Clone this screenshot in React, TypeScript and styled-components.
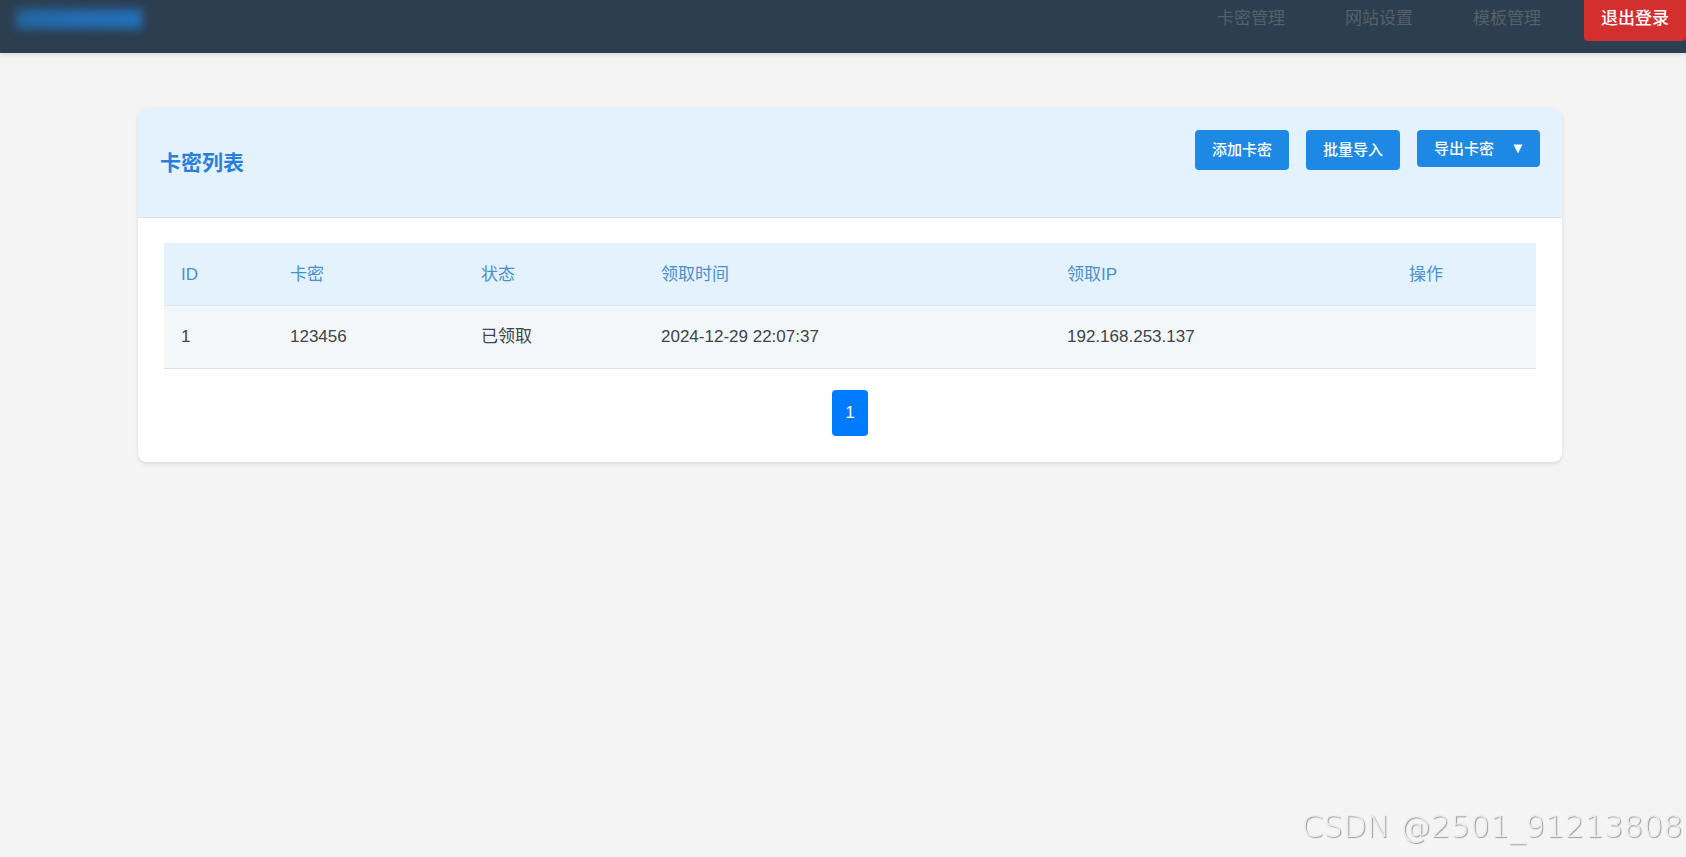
import React from 'react';
import styled, { createGlobalStyle } from 'styled-components';

const GlobalStyle = createGlobalStyle`
  * { box-sizing: border-box; }
  html { height: 100%; }
  body {
    margin: 0;
    min-height: 100%;
    background: #f4f4f4;
    color: #404448;
    font: 17px/28px "Liberation Sans", "Noto Sans CJK SC", sans-serif;
  }
`;

const NavBar = styled.header`
  display: flex;
  align-items: flex-start;
  justify-content: space-between;
  height: 53px;
  padding-left: 16px;
  background: #2c3e50;
  box-shadow: 0 2px 4px rgba(0, 0, 0, 0.1);
`;

const Logo = styled.div`
  width: 126px;
  height: 20px;
  margin-top: 9px;
  background: linear-gradient(90deg, #2465a0, #246bb0 40%, #2470b8);
  filter: blur(5px);
`;

const NavLinks = styled.nav`
  display: flex;
  align-items: flex-start;
  gap: 26px;
`;

const NavLink = styled.a`
  padding: 5px 17px 8px;
  color: #566069;
  text-decoration: none;
`;

const LogoutLink = styled(NavLink)`
  border-radius: 0 0 4px 4px;
  background: #d32f2f;
  color: #fff;
  font-weight: 500;
`;

const Main = styled.main`
  padding: 55px 124px 0 138px;
`;

const Card = styled.section`
  overflow: hidden;
  border-radius: 9px;
  background: #fff;
  box-shadow: 0 2px 4px rgba(0, 0, 0, 0.1);
`;

const CardHeader = styled.div`
  display: flex;
  align-items: flex-start;
  justify-content: space-between;
  padding: 22px;
  border-bottom: 1px solid #d3e3ef;
  background: #e3f2fd;
`;

const CardTitle = styled.h2`
  margin: 18px 0;
  color: #2a7fdb;
  font-size: 21px;
  line-height: 29px;
`;

const Actions = styled.div`
  display: flex;
  align-items: flex-start;
  gap: 17px;
`;

const ActionButton = styled.button<{ $compact?: boolean }>`
  display: flex;
  align-items: center;
  gap: 19px;
  height: ${(p) => (p.$compact ? 37 : 40)}px;
  padding: 0 17px;
  border: 0;
  border-radius: 4px;
  background: #1e88e5;
  color: #fff;
  font: 500 15px/20px "Liberation Sans", "Noto Sans CJK SC", sans-serif;
`;

const Caret = styled.svg`
  width: 10px;
  height: 10px;
`;

const CardBody = styled.div`
  padding: 25px 26px 26px;
`;

const Table = styled.table`
  width: 100%;
  table-layout: fixed;
  border-collapse: collapse;
`;

const Col = styled.col<{ $width: number }>`
  width: ${(p) => p.$width}px;
`;

const HeadCell = styled.th`
  padding: 18px 17px 16px;
  border-bottom: 1px solid #dde8f1;
  background: #e3f2fd;
  color: #4a90cf;
  font-weight: 400;
  text-align: left;
`;

const Cell = styled.td`
  height: 63px;
  padding: 17px;
  border-bottom: 1px solid #dee2e6;
  background: #f4f7fa;
`;

const Pagination = styled.nav`
  display: flex;
  justify-content: center;
  margin-top: 21px;
`;

const PageLink = styled.a`
  padding: 9px 13px;
  border-radius: 4px;
  background: #007bff;
  color: #fff;
  text-decoration: none;
`;

const Watermark = styled.div`
  position: fixed;
  right: 3px;
  bottom: 11px;
  color: #ededed;
  font: 200 31px/40px "DejaVu Sans Light", "DejaVu Sans", sans-serif;
  text-shadow: 1px 1px 1px #999;
`;

const columns = [
  { label: 'ID', width: 109 },
  { label: '卡密', width: 191 },
  { label: '状态', width: 180 },
  { label: '领取时间', width: 406 },
  { label: '领取IP', width: 342 },
  { label: '操作', width: 144 },
];

const rows = [['1', '123456', '已领取', '2024-12-29 22:07:37', '192.168.253.137', '']];

export default function App() {
  return (
    <>
      <GlobalStyle />
      <NavBar>
        <Logo />
        <NavLinks>
          <NavLink href="#cards">卡密管理</NavLink>
          <NavLink href="#settings">网站设置</NavLink>
          <NavLink href="#templates">模板管理</NavLink>
          <LogoutLink href="#logout">退出登录</LogoutLink>
        </NavLinks>
      </NavBar>
      <Main>
        <Card>
          <CardHeader>
            <CardTitle>卡密列表</CardTitle>
            <Actions>
              <ActionButton type="button">添加卡密</ActionButton>
              <ActionButton type="button">批量导入</ActionButton>
              <ActionButton type="button" $compact>
                导出卡密
                <Caret viewBox="0 0 10 10" aria-hidden="true">
                  <path d="M0.5 0.5h9L5 9.5z" fill="#fff" />
                </Caret>
              </ActionButton>
            </Actions>
          </CardHeader>
          <CardBody>
            <Table>
              <colgroup>
                {columns.map((c) => (
                  <Col key={c.label} $width={c.width} />
                ))}
              </colgroup>
              <thead>
                <tr>
                  {columns.map((c) => (
                    <HeadCell key={c.label} scope="col">{c.label}</HeadCell>
                  ))}
                </tr>
              </thead>
              <tbody>
                {rows.map((row) => (
                  <tr key={row[0]}>
                    {row.map((value, i) => (
                      <Cell key={columns[i].label}>{value}</Cell>
                    ))}
                  </tr>
                ))}
              </tbody>
            </Table>
            <Pagination>
              <PageLink href="#page-1">1</PageLink>
            </Pagination>
          </CardBody>
        </Card>
      </Main>
      <Watermark>CSDN @2501_91213808</Watermark>
    </>
  );
}
